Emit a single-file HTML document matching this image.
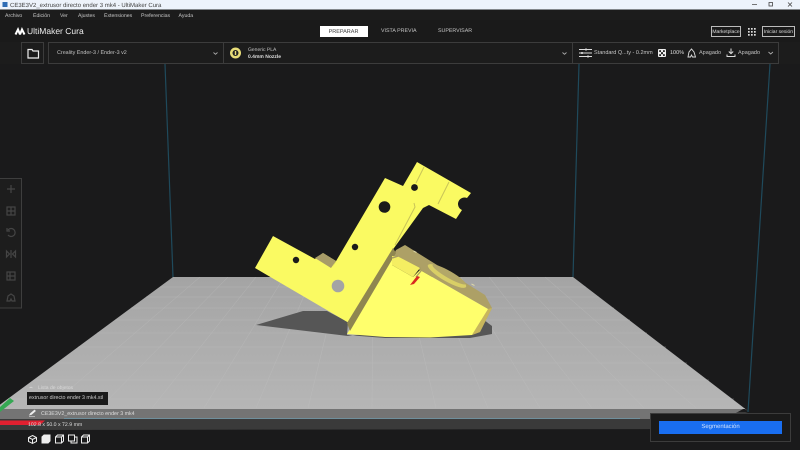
<!DOCTYPE html>
<html><head><meta charset="utf-8"><style>
html,body{margin:0;padding:0;background:#1a1a1b}
body{width:800px;height:450px;overflow:hidden;position:relative;font-family:"Liberation Sans",sans-serif;text-rendering:geometricPrecision}
.t{position:absolute;white-space:nowrap;line-height:1}
.b{position:absolute;box-sizing:border-box;border:1px solid #3c3c3c}
svg{position:absolute;left:0;top:0}
</style></head><body>
<svg width="800" height="450" viewBox="0 0 800 450">
<defs><linearGradient id="p" x1="0" y1="277" x2="0" y2="410" gradientUnits="userSpaceOnUse"><stop offset="0" stop-color="#a4a4a4"/><stop offset="1" stop-color="#b6b6b6"/></linearGradient></defs>
<rect width="800" height="450" fill="#1a1a1b"/>
<g stroke="#1f4a5c" stroke-width="1.200" fill="none">
<path d="M165 64L173 277M579 64L573 277M770 64L748 412"/>
</g>
<path d="M-10 408L0 420L0 430L700 429L748 412Z" fill="#3a3a3a"/>
<path d="M-10 408H745L725 419H-10Z" fill="#747474"/>
<path d="M173 277H573L748 411L745 409H-6Z" fill="url(#p)"/>
<g stroke="#c0c0c0" stroke-width=".5" fill="none" opacity=".55">
<path d="M200 277L48 408M228 277L100 408M256 277L152 408M284 277L204 408M312 277L256 408M340 277L308 408M373 277L372 408M405 277L436 408M433 277L488 408M461 277L540 408M489 277L592 408M517 277L644 408M545 277L696 408"/>
<path d="M160 287H586M146 297H599M131 308H614M115 320H630M97 333H647M78 347H666M57 363H687M34 380H709M8 399H734"/>
</g>
<path d="M64 418.500H640" stroke="#6f8f9c" stroke-width="1"/>
<path d="M0 407L10 398L14 401L0 412Z" fill="#35a853"/>
<path d="M0 420.500H45L40 425H0Z" fill="#e02030"/>
<!-- shadow -->
<path d="M256 325L303 311H327L348 322L347 335L385 338L470 338L492 334L492 326L484 320L400 330L348 336Z" fill="#565656"/>
<!-- L part -->
<path d="M273 236L315 259L323 253L336 261L332 268L385 178L403 186L417 162L471 193L467 198A6.500 6.500 0 0 0 462 210L456 219L429 205L423 208L394 248L349 323L255 268Z" fill="#fafa62"/>
<path d="M315 258L323 253L336 261L331 268Z" fill="#a89c68"/>
<path d="M424 167L416 183M449 182L438 204M414 203L415 207L395 245" stroke="#c8c458" stroke-width="1" fill="none"/>
<circle cx="296" cy="260" r="3.200" fill="#1a1a1a"/>
<circle cx="355" cy="247" r="3.200" fill="#1a1a1a"/>
<circle cx="384.500" cy="207" r="5.800" fill="#1a1a1a"/>
<circle cx="414.500" cy="187.500" r="3.400" fill="#1a1a1a"/>
<circle cx="338" cy="286" r="6.300" fill="#a4a4a4"/>
<!-- body top -->
<path d="M396 250L405 245L485 295L492 308L480 332L472 335L488 309L420 270L392 258Z" fill="#ada066"/>
<ellipse cx="447" cy="276" rx="22" ry="5.200" transform="rotate(30 447 276)" fill="#d9cf66"/>
<ellipse cx="449" cy="274.500" rx="19" ry="3.400" transform="rotate(30 449 274.500)" fill="#b3a768"/>
<path d="M472 335L488 309L492 308L480 332Z" fill="#c8b65c"/>
<path d="M413.500 251l3 1.500M471.500 284l3 1.500" stroke="#ddd6a8" stroke-width="1"/>
<!-- body front -->
<path d="M347 334L392 258L392 265L413 277L420 270L488 309L472 335L430 337.500L385 337Z" fill="#ffff6c"/>
<path d="M347 323L393 248L396 253L350 331Z" fill="#8f8650"/>
<path d="M392 256L397 256L420 268L413 277L392 265Z" fill="#f4ee62"/>
<path d="M420 267L421 271L416 277" stroke="#a89c62" stroke-width="1.200" fill="none"/>
<path d="M392 258L398 256" stroke="#a89c62" stroke-width="1.500" fill="none"/>
<path d="M410 285L417 276L420 277L414 284Z" fill="#d82a20"/>
<!-- chrome -->
<rect width="800" height="9.500" fill="#edf3fb"/>
<rect y="9.500" width="800" height="10.500" fill="#1c1c1c"/>
<rect y="20" width="800" height="22" fill="#1a1a1a"/>
<rect y="42" width="800" height="22" fill="#1c1c1c"/>
<rect x="2.500" y="2" width="5" height="5" fill="#2d6cb5"/>
<path d="M752 4.500h5" stroke="#555" stroke-width=".8"/>
<rect x="769" y="2.500" width="3.500" height="3.500" fill="none" stroke="#444" stroke-width=".8"/>
<path d="M788 2.500l4 4m0-4l-4 4" stroke="#444" stroke-width=".8"/>
<!-- logo -->
<path d="M15.500 34.500L18 29.500L20 34.500M20 34.500L22 29.500L24.500 34.500" stroke="#fff" stroke-width="2" fill="none"/>
<!-- folder -->
<path d="M28 49.500h4l1 1.500h5.500v7H28Z" fill="none" stroke="#eee" stroke-width="1.200"/>
<!-- material -->
<circle cx="235.500" cy="53" r="5.500" fill="#e8dd78"/><circle cx="235.500" cy="53" r="3" fill="#222"/><rect x="234.800" y="51" width="1.400" height="4" fill="#e8dd78"/>
<path d="M213.500 52.500l2 1.800 2-1.800M562.500 52.500l2 1.800 2-1.800M768.500 52l2.200 2 2.200-2" stroke="#aaa" fill="none" stroke-width=".9"/>
<!-- right icons -->
<path d="M579 49.500h13M579 53h13M579 56.500h13" stroke="#ddd" stroke-width="1"/>
<path d="M586 48.500v2M582 52v2M588 55.500v2" stroke="#ddd" stroke-width="1.500"/>
<rect x="658" y="49" width="8" height="8" rx="1" fill="#eee"/>
<g fill="#222"><rect x="659.200" y="50.200" width="1.800" height="1.800"/><rect x="663" y="50.200" width="1.800" height="1.800"/><rect x="661" y="52.200" width="2" height="2"/><rect x="659.200" y="54.200" width="1.800" height="1.800"/><rect x="663" y="54.200" width="1.800" height="1.800"/></g>
<path d="M688 57L689 52L691.500 49L694 52L695.500 57H692.500L691.500 55L690.500 57Z" fill="none" stroke="#ddd" stroke-width=".9"/>
<path d="M731 48.500v5M728.800 51.500l2.200 2.200 2.200-2.200M727 54.500v2h8v-2" fill="none" stroke="#ddd" stroke-width="1"/>
<g fill="#ddd"><rect x="748" y="28" width="1.700" height="1.700"/><rect x="751" y="28" width="1.700" height="1.700"/><rect x="754" y="28" width="1.700" height="1.700"/><rect x="748" y="31" width="1.700" height="1.700"/><rect x="751" y="31" width="1.700" height="1.700"/><rect x="754" y="31" width="1.700" height="1.700"/><rect x="748" y="34" width="1.700" height="1.700"/><rect x="751" y="34" width="1.700" height="1.700"/><rect x="754" y="34" width="1.700" height="1.700"/></g>
<!-- left tools -->
<rect x="0" y="179" width="22" height="129" fill="#1d1d1d"/>
<path d="M0 178.500H21.500V308H0" fill="none" stroke="#3e3e3e"/>
<g stroke="#454545" fill="none" stroke-width="1.200">
<path d="M11 185v8M7 189h8"/>
<rect x="7" y="207" width="8" height="8"/><path d="M7 211h8M11 207v8"/>
<path d="M8 230a4 4 0 1 1 0 5M7 228v3h3"/>
<path d="M6.500 251v6l3-3ZM15.500 251v6l-3-3ZM11 250v8"/>
<rect x="7" y="272" width="8" height="8"/><path d="M7 276h8M10 272v8"/>
<path d="M7 301l1-5 3-2 3 2 1 5h-3l-1-2-1 2Z"/>
</g>
<!-- bottom views -->
<g stroke="#eee" fill="none" stroke-width="1">
<path d="M32.500 435.500l4 2v4l-4 2-4-2v-4ZM28.500 437.500l4 2 4-2M32.500 439.500v4"/>
<path d="M42 437h6v6h-6ZM42 437l2-2h6v6l-2 2" fill="#eee"/>
<path d="M55.500 437h6v6h-6ZM55.500 437l2-2h6v6l-2 2M61.500 437l2-2"/>
<path d="M68.500 435h6v6h-6ZM71 441v2h6v-6h-2"/>
<path d="M81.500 437h6v6h-6ZM81.500 437l2-2h6v6l-2 2M87.500 437l2-2"/>
</g>
<path d="M29 416.500h6M29.500 415l1-1.500 4-3.500 1 1-4 3.500Z" fill="#eee" stroke="#eee" stroke-width=".6"/>
<path d="M29.500 388l1.500-1 1.500 1" stroke="#ddd" fill="none" stroke-width=".7"/>
<rect x="27" y="392" width="81" height="13" fill="#1a1a1a"/>
</svg>
<div class="b" style="left:21px;top:42px;width:23px;height:22px"></div>
<div class="b" style="left:48px;top:42px;width:731px;height:22px"></div>
<div style="position:absolute;left:223px;top:42px;width:1px;height:22px;background:#3c3c3c"></div>
<div style="position:absolute;left:572px;top:42px;width:1px;height:22px;background:#3c3c3c"></div>
<div class="t" style="left:10px;top:2.500px;font-size:6px;color:#444">CE3E3V2_extrusor directo ender 3 mk4 - UltiMaker Cura</div>
<div class="t" style="left:5px;top:13.500px;font-size:5.200px;color:#c4c4c4">Archivo</div>
<div class="t" style="left:33px;top:13.500px;font-size:5.200px;color:#c4c4c4">Edición</div>
<div class="t" style="left:60px;top:13.500px;font-size:5.200px;color:#c4c4c4">Ver</div>
<div class="t" style="left:78px;top:13.500px;font-size:5.200px;color:#c4c4c4">Ajustes</div>
<div class="t" style="left:104px;top:13.500px;font-size:5.200px;color:#c4c4c4">Extensiones</div>
<div class="t" style="left:141px;top:13.500px;font-size:5.200px;color:#c4c4c4">Preferencias</div>
<div class="t" style="left:178.500px;top:13.500px;font-size:5.200px;color:#c4c4c4">Ayuda</div>
<div class="t" style="left:27px;top:27px;font-size:8.500px;color:#eee">UltiMaker Cura</div>
<div class="t" style="left:319.500px;top:25.500px;width:48px;height:11.500px;background:#fff;color:#333;font-size:5.500px;line-height:12px;text-align:center">PREPARAR</div>
<div class="t" style="left:381px;top:29px;font-size:5.300px;color:#c4c4c4">VISTA PREVIA</div>
<div class="t" style="left:438px;top:29px;font-size:5.300px;color:#c4c4c4">SUPERVISAR</div>
<div class="t" style="left:711px;top:25.500px;width:30px;height:11.500px;box-sizing:border-box;border:1px solid #bbb;font-size:5px;line-height:10px;text-align:center;color:#ddd">Marketplace</div>
<div class="t" style="left:762px;top:25.500px;width:33px;height:11.500px;box-sizing:border-box;border:1px solid #bbb;font-size:5px;line-height:10px;text-align:center;color:#ddd">Iniciar sesión</div>
<div class="t" style="left:57px;top:51px;font-size:5.400px;color:#c4c4c4">Creality Ender-3 / Ender-3 v2</div>
<div class="t" style="left:248px;top:48px;font-size:5px;color:#c4c4c4">Generic PLA</div>
<div class="t" style="left:248px;top:54.500px;font-size:5px;color:#ddd;font-weight:bold">0.4mm Nozzle</div>
<div class="t" style="left:594px;top:51px;font-size:5.500px;color:#c4c4c4">Standard Q...ty - 0.2mm</div>
<div class="t" style="left:670px;top:51px;font-size:5.500px;color:#ddd">100%</div>
<div class="t" style="left:699px;top:51px;font-size:5.500px;color:#c4c4c4">Apagado</div>
<div class="t" style="left:738px;top:51px;font-size:5.500px;color:#c4c4c4">Apagado</div>
<div class="t" style="left:38px;top:385.500px;font-size:5px;color:#d8d8d8">Lista de objetos</div>
<div class="t" style="left:29px;top:396px;font-size:5.300px;color:#ccc">extrusor directo ender 3 mk4.stl</div>
<div class="t" style="left:41px;top:411.500px;font-size:5.300px;color:#ddd">CE3E3V2_extrusor directo ender 3 mk4</div>
<div class="t" style="left:28px;top:422.500px;font-size:5.200px;color:#ddd">102.8 x 50.0 x 72.9 mm</div>
<div class="b" style="left:650px;top:413px;width:141px;height:29px;background:#1a1a1a"></div>
<div class="t" style="left:659px;top:421px;width:123px;height:13px;background:#196ef0;color:#cfe0fa;font-size:6px;line-height:13px;text-align:center">Segmentación</div>
</body></html>
